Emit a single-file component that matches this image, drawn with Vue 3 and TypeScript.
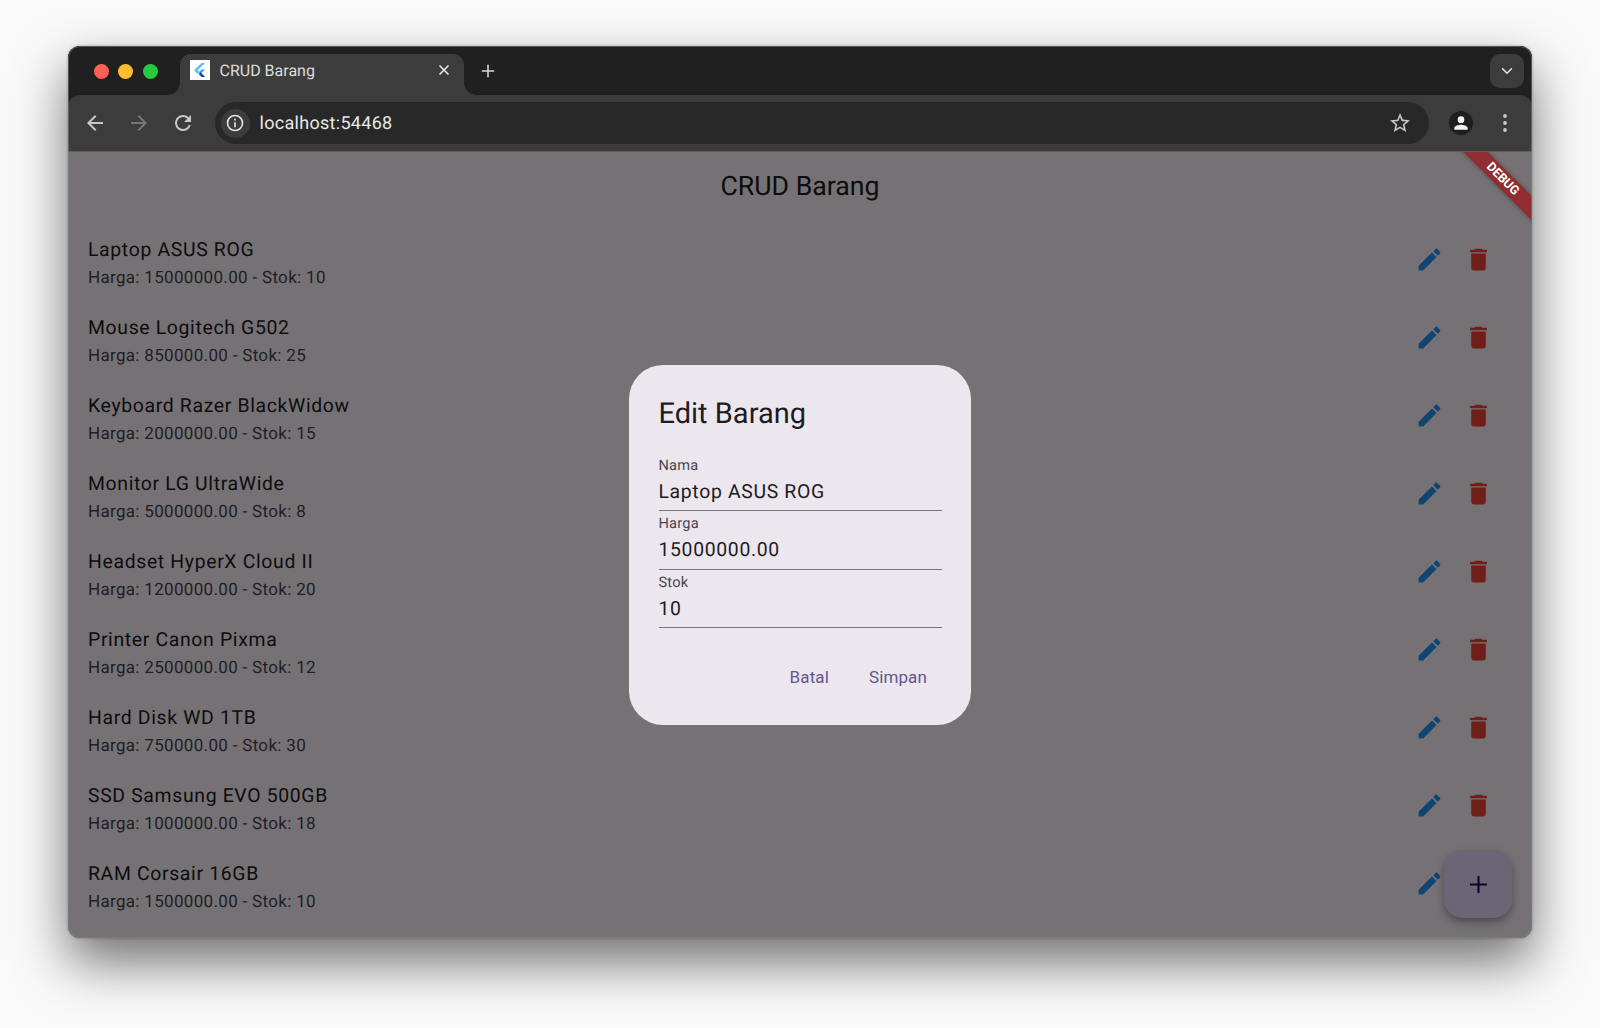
<script setup lang="ts">
interface Barang {
  nama: string;
  harga: string;
  stok: number;
}

const items: Barang[] = [
  { nama: "Laptop ASUS ROG", harga: "15000000.00", stok: 10 },
  { nama: "Mouse Logitech G502", harga: "850000.00", stok: 25 },
  { nama: "Keyboard Razer BlackWidow", harga: "2000000.00", stok: 15 },
  { nama: "Monitor LG UltraWide", harga: "5000000.00", stok: 8 },
  { nama: "Headset HyperX Cloud II", harga: "1200000.00", stok: 20 },
  { nama: "Printer Canon Pixma", harga: "2500000.00", stok: 12 },
  { nama: "Hard Disk WD 1TB", harga: "750000.00", stok: 30 },
  { nama: "SSD Samsung EVO 500GB", harga: "1000000.00", stok: 18 },
  { nama: "RAM Corsair 16GB", harga: "1500000.00", stok: 10 },
];

const fields = [
  { label: "Nama", value: "Laptop ASUS ROG" },
  { label: "Harga", value: "15000000.00" },
  { label: "Stok", value: "10" },
];
</script>

<template>
  <div class="page">
    <div class="window">
      <div class="tabstrip">
        <div class="lights">
          <span class="light red"></span>
          <span class="light yellow"></span>
          <span class="light green"></span>
        </div>
        <div class="tab">
          <svg class="favicon" viewBox="0 0 20 20">
            <rect width="20" height="20" fill="#fff" />
            <path d="M11.5 3h3.6L7.8 10.3 9.6 12.2 7.8 14 4 10.3z" fill="#5cc3f2" />
            <path d="M11.5 9.6h3.6L10.6 14 8.8 12.2z" fill="#38a5e8" />
            <path d="M8.8 13.9 10.6 12.2 15.1 17h-3.6z" fill="#0d47a1" />
          </svg>
          <span class="tab-title">CRUD Barang</span>
          <svg class="tab-close" viewBox="0 0 12 12">
            <path d="M1.5 1.5l9 9M10.5 1.5l-9 9" stroke="#e6e6e6" stroke-width="1.6" fill="none" />
          </svg>
        </div>
        <svg class="new-tab" viewBox="0 0 14 14">
          <path d="M7 .8v12.4M.8 7h12.4" stroke="#d8d8d8" stroke-width="1.6" fill="none" />
        </svg>
        <div class="tab-search">
          <svg viewBox="0 0 12 8" width="12" height="8">
            <path d="M1.2 1.4 6 6.2l4.8-4.8" stroke="#e0e0e0" stroke-width="1.5" fill="none" />
          </svg>
        </div>
      </div>

      <div class="toolbar">
        <button class="tool">
          <svg viewBox="0 0 24 24" width="24" height="24">
            <path d="M20 11H7.83l5.59-5.59L12 4l-8 8 8 8 1.41-1.41L7.83 13H20v-2z" fill="#c8c8c8" />
          </svg>
        </button>
        <button class="tool">
          <svg viewBox="0 0 24 24" width="24" height="24">
            <path d="M12 4l-1.41 1.41L16.17 11H4v2h12.17l-5.58 5.59L12 20l8-8z" fill="#767676" />
          </svg>
        </button>
        <button class="tool">
          <svg viewBox="0 0 24 24" width="24" height="24">
            <path d="M17.65 6.35A7.96 7.96 0 0 0 12 4a8 8 0 1 0 7.73 10h-2.08A6 6 0 1 1 12 6c1.66 0 3.14.69 4.22 1.78L13 11h7V4l-2.35 2.35z" fill="#c8c8c8" />
          </svg>
        </button>
        <div class="address">
          <span class="info">
            <svg viewBox="0 0 24 24" width="20" height="20">
              <path d="M11 7h2v2h-2zm0 4h2v6h-2zm1-9a10 10 0 1 0 0 20 10 10 0 0 0 0-20zm0 18a8 8 0 1 1 0-16 8 8 0 0 1 0 16z" fill="#e0e0e0" />
            </svg>
          </span>
          <span class="url">localhost:54468</span>
          <svg class="star" viewBox="0 0 24 24" width="24" height="24">
            <path d="M22 9.24l-7.19-.62L12 2 9.19 8.63 2 9.24l5.46 4.73L5.82 21 12 17.27 18.18 21l-1.63-7.03L22 9.24zM12 15.4l-3.76 2.27 1-4.28-3.32-2.88 4.38-.38L12 6.1l1.71 4.04 4.38.38-3.32 2.88 1 4.28L12 15.4z" fill="#c8c8c8" />
          </svg>
        </div>
        <button class="tool profile">
          <span class="avatar">
            <svg viewBox="0 0 24 24" width="24" height="24">
              <path d="M12 12a4 4 0 1 0 0-8 4 4 0 0 0 0 8zm0 2c-2.67 0-8 1.34-8 4v2h16v-2c0-2.66-5.33-4-8-4z" fill="#f2f2f2" />
            </svg>
          </span>
        </button>
        <button class="tool">
          <svg viewBox="0 0 24 24" width="24" height="24">
            <circle cx="12" cy="5" r="1.9" fill="#c8c8c8" />
            <circle cx="12" cy="12" r="1.9" fill="#c8c8c8" />
            <circle cx="12" cy="19" r="1.9" fill="#c8c8c8" />
          </svg>
        </button>
      </div>

      <div class="viewport">
        <header class="appbar">CRUD Barang</header>
        <div class="list">
          <div v-for="item in items" :key="item.nama" class="row">
            <div class="row-text">
              <div class="row-title">{{ item.nama }}</div>
              <div class="row-sub">Harga: {{ item.harga }} - Stok: {{ item.stok }}</div>
            </div>
            <span class="act">
              <svg viewBox="0 0 24 24" width="29" height="29">
                <path d="M3 17.25V21h3.75L17.81 9.94l-3.75-3.75L3 17.25zM20.71 7.04c.39-.39.39-1.02 0-1.41l-2.34-2.34c-.39-.39-1.02-.39-1.41 0l-1.83 1.83 3.75 3.75 1.83-1.83z" fill="#2196f3" />
              </svg>
            </span>
            <span class="act">
              <svg viewBox="0 0 24 24" width="29" height="29">
                <path d="M6 19c0 1.1.9 2 2 2h8c1.1 0 2-.9 2-2V7H6v12zM19 4h-3.5l-1-1h-5l-1 1H5v2h14V4z" fill="#f44336" />
              </svg>
            </span>
          </div>
        </div>

        <button class="fab">
          <svg viewBox="0 0 24 24" width="29" height="29">
            <path d="M12 5v14M5 12h14" stroke="#21005d" stroke-width="1.7" fill="none" />
          </svg>
        </button>

        <div class="scrim">
          <div class="dialog">
            <h2 class="dialog-title">Edit Barang</h2>
            <div v-for="field in fields" :key="field.label" class="field">
              <span class="field-label">{{ field.label }}</span>
              <span class="field-value">{{ field.value }}</span>
            </div>
            <div class="actions">
              <button class="text-btn">Batal</button>
              <button class="text-btn">Simpan</button>
            </div>
          </div>
        </div>

        <div class="debug">DEBUG</div>
      </div>
    </div>
  </div>
</template>

<style scoped>
.page {
  height: 1028px;
  box-sizing: border-box;
  padding: 46px 68px 90px;
  background: #f9f9f9;
  font-family: Roboto, "Liberation Sans", sans-serif;
  text-rendering: geometricPrecision;
  overflow: hidden;
}

.window {
  position: relative;
  height: 100%;
  display: flex;
  flex-direction: column;
  border-radius: 12px;
  overflow: hidden;
  background: #202020;
  box-shadow: 0 24px 52px rgba(0, 0, 0, 0.55), 0 0 3px rgba(0, 0, 0, 0.3);
}

/* hairline round the whole window */
.window::after {
  content: "";
  position: absolute;
  inset: 0;
  border: 1px solid rgba(130, 130, 130, 0.55);
  border-radius: 12px;
  pointer-events: none;
}

.tabstrip {
  height: 49px;
  flex: none;
  display: flex;
  align-items: flex-end;
  background: #202020;
}

.lights {
  width: 112px;
  height: 49px;
  box-sizing: border-box;
  padding: 17.5px 0 0 25.5px;
  display: flex;
  gap: 9.5px;
}

.light {
  width: 15px;
  height: 15px;
  border-radius: 50%;
}

.red {
  background: #ff5f57;
}

.yellow {
  background: #febc2e;
}

.green {
  background: #28c840;
}

.tab {
  position: relative;
  width: 284px;
  height: 41px;
  box-sizing: border-box;
  padding: 6px 14px 15px 10px;
  display: flex;
  align-items: center;
  background: #3c3c3c;
  border-radius: 11px 11px 0 0;
}

.tab::before,
.tab::after {
  content: "";
  position: absolute;
  bottom: 0;
  width: 12px;
  height: 12px;
}

.tab::before {
  left: -12px;
  background: radial-gradient(circle at 0 0, transparent 11.5px, #3c3c3c 12px);
}

.tab::after {
  right: -12px;
  background: radial-gradient(circle at 100% 0, transparent 11.5px, #3c3c3c 12px);
}

.favicon {
  width: 20px;
  height: 20px;
  flex: none;
}

.tab-title {
  margin-left: 9.5px;
  flex: 1;
  font-size: 16px;
  color: #dcdcdc;
}

.tab-close {
  width: 12px;
  height: 12px;
}

.new-tab {
  width: 14px;
  height: 14px;
  margin: 0 0 17px 17px;
}

.tab-search {
  margin: 0 8px 7px auto;
  width: 34px;
  height: 34px;
  display: flex;
  align-items: center;
  justify-content: center;
  background: #3c3c3c;
  border-radius: 10px;
}

.toolbar {
  height: 57px;
  flex: none;
  box-sizing: border-box;
  padding: 0 5px;
  display: flex;
  align-items: center;
  background: #3c3c3c;
  border-radius: 12px 12px 0 0;
  border-bottom: 1px solid #5e5e5e;
}

.tool {
  width: 44px;
  height: 44px;
  flex: none;
  padding: 0;
  display: flex;
  align-items: center;
  justify-content: center;
  background: none;
  border: none;
}

.address {
  flex: 1;
  height: 42px;
  margin: 0 10px 0 9.5px;
  padding: 0 17px 0 6px;
  display: flex;
  align-items: center;
  background: #282828;
  border-radius: 21px;
}

.info {
  width: 29px;
  height: 29px;
  display: flex;
  align-items: center;
  justify-content: center;
  background: #3c3c3c;
  border-radius: 50%;
}

.url {
  flex: 1;
  margin-left: 10px;
  font-size: 18px;
  letter-spacing: 0.3px;
  color: #e8e8e8;
}

.avatar {
  width: 24px;
  height: 24px;
  display: flex;
  align-items: center;
  justify-content: center;
  background: #1e1e1e;
  border-radius: 50%;
}

.avatar svg {
  width: 20px;
  height: 20px;
}

.viewport {
  position: relative;
  flex: 1;
  min-height: 0;
  background: #fef7ff;
  overflow: hidden;
}

.appbar {
  height: 68px;
  display: flex;
  align-items: center;
  justify-content: center;
  font-size: 26.7px;
  color: #1d1b20;
}

.row {
  height: 78px;
  box-sizing: border-box;
  padding: 0 29.5px 0 20px;
  display: flex;
  align-items: center;
}

.row-text {
  flex: 1;
  padding-top: 6px;
}

.row-title {
  margin-bottom: 2px;
  font-size: 19.4px;
  line-height: 29px;
  letter-spacing: 0.66px;
  color: #1d1b20;
}

.row-sub {
  font-size: 17px;
  line-height: 24px;
  letter-spacing: 0.32px;
  color: #49454f;
}

.act {
  width: 48.5px;
  height: 48.5px;
  display: flex;
  align-items: center;
  justify-content: center;
}

.fab {
  position: absolute;
  right: 20px;
  bottom: 20px;
  width: 68px;
  height: 68px;
  padding: 0;
  display: flex;
  align-items: center;
  justify-content: center;
  background: #eaddff;
  border: none;
  border-radius: 19px;
  box-shadow: 0 4px 9px rgba(0, 0, 0, 0.35);
}

.scrim {
  position: absolute;
  inset: 0;
  display: flex;
  align-items: center;
  justify-content: center;
  background: rgba(0, 0, 0, 0.54);
}

.dialog {
  width: 342px;
  box-sizing: border-box;
  padding: 30px 29px 24px 29.5px;
  background: #ece6ee;
  border-radius: 34px;
}

.dialog-title {
  margin: 0 0 18.5px;
  font-size: 29px;
  line-height: 39px;
  font-weight: 400;
  color: #1d1b20;
}

.field {
  height: 58.5px;
  box-sizing: border-box;
  display: flex;
  flex-direction: column;
  border-bottom: 1px solid #79747e;
}

.field-label {
  font-size: 14.6px;
  line-height: 24px;
  letter-spacing: 0.2px;
  color: #49454f;
}

.field-value {
  font-size: 19.4px;
  line-height: 30px;
  letter-spacing: 0.66px;
  color: #1d1b20;
}

.actions {
  margin-top: 25px;
  display: flex;
  justify-content: flex-end;
  gap: 10px;
}

.text-btn {
  height: 48px;
  padding: 0 15px;
  background: none;
  border: none;
  font-family: inherit;
  font-size: 17px;
  letter-spacing: 0.12px;
  color: #65558f;
}

.debug {
  position: absolute;
  top: 20px;
  right: -32px;
  width: 120px;
  height: 17px;
  box-sizing: border-box;
  padding-right: 4px;
  display: flex;
  align-items: center;
  justify-content: center;
  background: #8f2d31;
  box-shadow: 0 0 5px rgba(0, 0, 0, 0.3);
  transform: rotate(45deg);
  font-size: 12.6px;
  font-weight: 700;
  color: #fff;
}
</style>
